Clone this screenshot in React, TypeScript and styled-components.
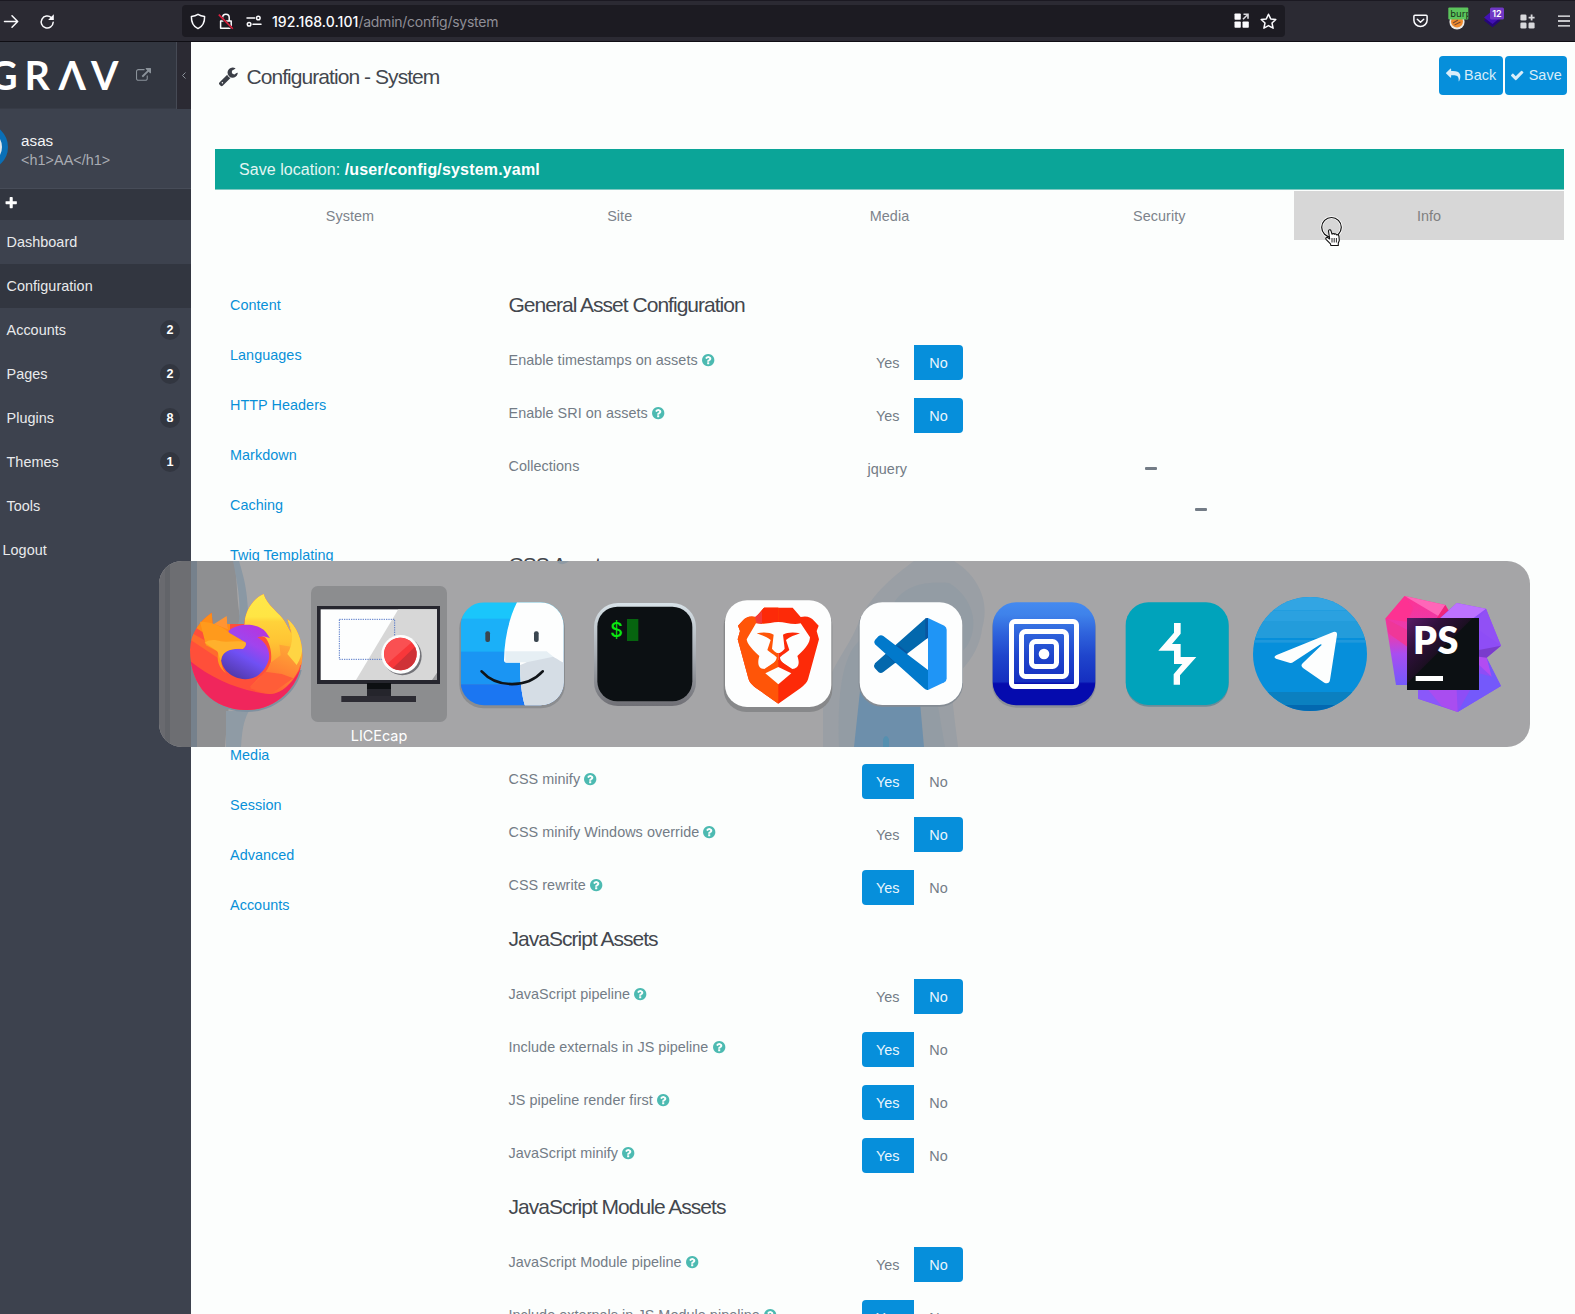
import React from "react";
import styled, { createGlobalStyle } from "styled-components";

const SANS = `"Liberation Sans", Arial, sans-serif`;
const UI = `Inter, Roboto, sans-serif`;

const GlobalStyle = createGlobalStyle`
  html, body { margin: 0; padding: 0; }
  body { background: #fcfefd; overflow: hidden; }
  *, *::before, *::after { box-sizing: border-box; }
`;

const Screen = styled.div`
  position: relative;
  width: 1575px;
  height: 1314px;
  overflow: hidden;
  display: flex;
  flex-direction: column;
  background: #fcfefd;
  font-family: ${SANS};
  font-size: 14.4px;
  letter-spacing: 0.045px;
  color: #737c86;
`;

/* ---------- browser chrome ---------- */

const Chrome = styled.header`
  flex: none;
  height: 42px;
  display: flex;
  align-items: center;
  background: #2b2a33;
  border-top: 1px solid #1b1922;
  border-bottom: 1px solid #0f0e14;
  color: #fbfbfe;
  font-family: ${UI};
`;

const Glyph = styled.svg<{ $ml?: number; $up?: number }>`
  flex: none;
  display: block;
  overflow: visible;
  margin-left: ${(p) => p.$ml ?? 0}px;
  margin-bottom: ${(p) => p.$up ?? 0}px;
`;

const UrlBar = styled.div`
  flex: none;
  width: 1103px;
  height: 32px;
  margin-left: 126px;
  border-radius: 4px;
  background: #1c1b22;
  display: flex;
  align-items: center;
`;

const Url = styled.div`
  margin-left: 10px;
  width: 958px;
  font-size: 14px;
  line-height: 33px;
  padding-top: 1px;
  color: #8f8e96;
  letter-spacing: -0.25px;
  b {
    font-weight: 500;
    color: #fbfbfe;
    letter-spacing: 0.06px;
  }
`;

/* ---------- sidebar ---------- */

const Body = styled.div`
  flex: 1;
  display: flex;
  min-height: 0;
`;

const Sidebar = styled.aside`
  flex: none;
  width: 191px;
  background: #3d424e;
  color: #e9eaec;
`;

const Brand = styled.div`
  height: 67px;
  display: flex;
  align-items: center;
  background: #323640;
  border-bottom: 1px solid #373b46;
`;

const Collapse = styled.div`
  margin-left: auto;
  width: 15px;
  height: 67px;
  background: #2b2a33;
  border-left: 1px solid #464a55;
  display: flex;
  align-items: center;
  justify-content: center;
`;

const User = styled.div`
  height: 80px;
  display: flex;
  align-items: center;
  border-bottom: 1px solid #474c58;
`;

const Avatar = styled.div`
  flex: none;
  width: 46px;
  height: 46px;
  margin-left: -38px;
  margin-top: -3px;
  border-radius: 50%;
  border: 6px solid #0a6fb6;
  background: #dfe6ea;
`;

const UserText = styled.div`
  margin-left: 13px;
  padding-top: 3px;
  display: flex;
  flex-direction: column;
`;

const UserName = styled.span`
  font-size: 15.2px;
  line-height: 20px;
  color: #f4f5f6;
`;

const UserTitle = styled.span`
  line-height: 19px;
  color: #a9acb3;
`;

const QuickAdd = styled.div`
  height: 31px;
  display: flex;
  align-items: center;
  padding: 0 0 3px 3.5px;
  background: #323640;
`;

const NavItem = styled.div<{ $active?: boolean; $indent?: number }>`
  height: 44px;
  display: flex;
  align-items: center;
  justify-content: space-between;
  padding: 0 11px 0 ${(p) => p.$indent ?? 6.5}px;
  background: ${(p) => (p.$active ? "#323640" : "transparent")};
`;

const Count = styled.span`
  width: 20px;
  height: 20px;
  border-radius: 50%;
  background: #323640;
  color: #fff;
  font-size: 12.6px;
  font-weight: 700;
  line-height: 20px;
  text-align: center;
`;

/* ---------- main column ---------- */

const Main = styled.main`
  flex: 1;
  min-width: 0;
  display: flex;
  flex-direction: column;
`;

const TitleBar = styled.div`
  flex: none;
  height: 107px;
  padding: 14px 8px 0 27px;
  display: flex;
  align-items: flex-start;
`;

const TitleIcon = styled.div`
  padding-top: 10px;
`;

const Title = styled.h1`
  flex: 1;
  margin: 0 0 0 8px;
  font-weight: 400;
  font-size: 21px;
  line-height: 41px;
  letter-spacing: -0.94px;
  color: #43474e;
`;

const Button = styled.button<{ $w: number }>`
  width: ${(p) => p.$w}px;
  height: 38.5px;
  margin: 0 0 0 2px;
  padding: 0;
  border: 0;
  border-radius: 4px;
  background: #068fdb;
  color: #d9edf9;
  font: inherit;
  letter-spacing: inherit;
  display: flex;
  align-items: center;
  justify-content: center;
  gap: 4px;
`;

const SaveLocation = styled.div`
  flex: none;
  height: 41px;
  margin: 0 11px 0 24px;
  padding-left: 24px;
  font-size: 16px;
  line-height: 42px;
  background: #0ba598;
  border-bottom: 1px solid #7fc9c2;
  color: #e3f5f3;
  b {
    color: #fff;
    letter-spacing: 0.17px;
  }
`;

const Tabs = styled.div`
  flex: none;
  height: 50px;
  margin: 0 11px 0 24px;
  padding-top: 1px;
  display: flex;
`;

const Tab = styled.div<{ $hover?: boolean }>`
  flex: 1;
  text-align: center;
  line-height: 50px;
  color: ${(p) => (p.$hover ? "#808080" : "#7d838b")};
  background: ${(p) => (p.$hover ? "#d7d7d7" : "transparent")};
`;

const Panel = styled.div`
  flex: none;
  display: flex;
  padding: 40px 0 0 39px;
`;

const SideTabs = styled.nav`
  width: 278.5px;
  display: flex;
  flex-direction: column;
`;

const SideTab = styled.a<{ $skip?: number }>`
  height: 50px;
  margin-top: ${(p) => (p.$skip ?? 0) * 50}px;
  line-height: 51px;
  color: #0890d8;
`;

const Fields = styled.div`
  padding-top: 9px;
`;

const Heading = styled.h2`
  margin: 0;
  height: 56px;
  font-weight: 400;
  font-size: 21px;
  line-height: 32px;
  letter-spacing: -0.98px;
  color: #43474e;
`;

const Row = styled.div<{ $h?: number }>`
  height: ${(p) => p.$h ?? 53}px;
  display: flex;
  align-items: flex-start;
`;

const Label = styled.div`
  width: 353px;
  display: flex;
  align-items: center;
  line-height: 31px;
`;

const Toggle = styled.div`
  display: flex;
  height: 35.2px;
  line-height: 36px;
`;

const Choice = styled.span<{ $on: boolean; $side: "l" | "r" }>`
  width: ${(p) => (p.$side === "l" ? 52.5 : 49)}px;
  text-align: center;
  color: ${(p) => (p.$on ? "#eaf6fd" : "#737c86")};
  background: ${(p) => (p.$on ? "#068fdb" : "transparent")};
  border-radius: ${(p) => (p.$side === "l" ? "4px 0 0 4px" : "0 4px 4px 0")};
`;

const Collection = styled.div`
  display: flex;
  flex-direction: column;
  margin: -3px 0 0 6px;
`;

const CollectionItem = styled.div`
  height: 41px;
  display: flex;
  align-items: center;
`;

const CollectionKey = styled.span<{ $w: number }>`
  width: ${(p) => p.$w}px;
`;

const Minus = styled.span`
  width: 12px;
  height: 3px;
  border-radius: 1px;
  background: #737c86;
`;

/* ---------- app switcher, floating over the page ---------- */

const Switcher = styled.div`
  position: absolute;
  left: 159px;
  top: 561px;
  width: 1371px;
  height: 186px;
  border-radius: 23px;
  overflow: hidden;
  background: #a5a5a7;
`;

const Backdrop = styled.svg`
  position: absolute;
  inset: 0;
  display: block;
`;

const AppRow = styled.div`
  position: relative;
  display: flex;
  padding: 25px 0 0 19px;
`;

const AppCell = styled.div`
  flex: none;
  width: 136px;
  margin-right: -3px;
`;

const AppTile = styled.div<{ $selected?: boolean }>`
  width: 136px;
  height: 136px;
  border-radius: 7px;
  background: ${(p) => (p.$selected ? "#8c8d8f" : "transparent")};
`;

const AppArt = styled.svg`
  display: block;
`;

const AppName = styled.div`
  font-family: ${UI};
  font-size: 14.4px;
  line-height: 28px;
  letter-spacing: 0;
  text-align: center;
  color: #fff;
`;

const Cursor = styled.svg`
  position: absolute;
  left: 1318px;
  top: 214px;
`;

/* ---------- icons ---------- */

const FA = {
  external:
    "M1408 928v320q0 119-84.5 203.5t-203.5 84.5h-832q-119 0-203.5-84.5t-84.5-203.5v-832q0-119 84.5-203.5t203.5-84.5h704q14 0 23 9t9 23v64q0 14-9 23t-23 9h-704q-66 0-113 47t-47 113v832q0 66 47 113t113 47h832q66 0 113-47t47-113v-320q0-14 9-23t23-9h64q14 0 23 9t9 23zm384-864v512q0 26-19 45t-45 19-45-19l-176-176-652 652q-10 10-23 10t-23-10l-114-114q-10-10-10-23t10-23l652-652-176-176q-19-19-19-45t19-45 45-19h512q26 0 45 19t19 45z",
  plus: "M1600 736v192q0 40-28 68t-68 28h-416v416q0 40-28 68t-68 28h-192q-40 0-68-28t-28-68v-416h-416q-40 0-68-28t-28-68v-192q0-40 28-68t68-28h416v-416q0-40 28-68t68-28h192q40 0 68 28t28 68v416h416q40 0 68 28t28 68z",
  check:
    "M1671 566q0 40-28 68l-724 724-136 136q-28 28-68 28t-68-28l-136-136-362-362q-28-28-28-68t28-68l136-136q28-28 68-28t68 28l294 295 656-657q28-28 68-28t68 28l136 136q28 28 28 68z",
  reply:
    "M1792 1120q0 166-127 451-3 7-10.5 24t-13.5 30-13 22q-12 17-28 17-15 0-23.5-10t-8.5-25q0-9 2.5-26.5t2.5-23.5q5-68 5-123 0-101-17.5-181t-48.5-138.5-80-101-105.5-69.5-133-42.5-154-21.5-175.5-6h-224v256q0 26-19 45t-45 19-45-19l-512-512q-19-19-19-45t19-45l512-512q19-19 45-19t45 19 19 45v256h224q713 0 875 403 53 134 53 333z",
  wrench:
    "M448 1472q0-26-19-45t-45-19-45 19-19 45 19 45 45 19 45-19 19-45zm644-420l-682 682q-37 37-90 37-52 0-91-37l-106-108q-38-36-38-90 0-53 38-91l681-681q39 98 114.5 173.5t173.5 114.5zm634-435q0 39-23 106-47 134-164.5 217.5t-258.5 83.5q-185 0-316.5-131.5t-131.5-316.5 131.5-316.5 316.5-131.5q58 0 121.5 16.5t107.5 46.5q16 11 16 28t-16 28l-293 169v224l193 107q5-3 79-48.5t135.5-81 70.5-35.5q15 0 23.5 10t8.5 25z",
  help: "M1024 1376v-192q0-14-9-23t-23-9h-192q-14 0-23 9t-9 23v192q0 14 9 23t23 9h192q14 0 23-9t9-23zm256-672q0-88-55.5-163t-138.5-116-170-41q-243 0-371 213-15 24 8 42l132 100q7 6 19 6 16 0 25-12 53-68 86-92 34-24 86-24 48 0 85.5 26t37.5 59q0 38-20 61t-68 45q-63 28-115.5 86.5t-52.5 125.5v36q0 14 9 23t23 9h192q14 0 23-9t9-23q0-19 21.5-49.5t54.5-49.5q32-18 49-28.5t46-35 44.5-48 28-60.5 12.5-81zm384 192q0 209-103 385.5t-279.5 279.5-385.5 103-385.5-103-279.5-279.5-103-385.5 103-385.5 279.5-279.5 385.5-103 385.5 103 279.5 279.5 103 385.5z",
};

function Fa({ name, size, ml, color = "currentColor" }: { name: keyof typeof FA; size: number; ml?: number; color?: string }) {
  return (
    <Glyph width={size} height={size} viewBox="0 0 1792 1792" $ml={ml}>
      <path d={FA[name]} fill={color} />
    </Glyph>
  );
}

function BrowserChrome() {
  const line = { fill: "none", stroke: "#fbfbfe", strokeWidth: 1.5, strokeLinecap: "round" as const, strokeLinejoin: "round" as const };
  return (
    <Chrome>
      <Glyph $ml={3} width="16" height="16" viewBox="0 0 16 16">
        <path {...line} d="M1.5 8.5H14.5M9 2.8L14.7 8.5L9 14.2" />
      </Glyph>
      <Glyph $ml={20} width="17" height="17" viewBox="0 0 17 17">
        <path {...line} d="M14.2 9.3A6 6 0 1 1 12.3 4.6" />
        <path d="M14.8 1.2V6.9H9.1Z" fill="#fbfbfe" />
      </Glyph>
      <UrlBar>
        <Glyph $ml={7.5} width="16" height="17" viewBox="0 0 16 17">
          <path {...line} d="M8 1.3C6 2.6 3.8 3.2 1.4 3.4C1.2 9.5 3 13.2 8 15.6C13 13.2 14.8 9.5 14.6 3.4C12.2 3.2 10 2.6 8 1.3Z" />
        </Glyph>
        <Glyph $ml={12.5} width="16" height="17" viewBox="0 0 16 17">
          <path {...line} d="M4.6 7.5V4.6A3.3 3.3 0 0 1 11.2 4.6V7.5M2.6 8H13.2V15.2H2.6Z" />
          <path d="M1 2.2L14.6 15.8" stroke="#1c1b22" strokeWidth="2.6" />
          <path d="M.8 1.6L14.8 15.8" stroke="#e3203f" strokeWidth="1.6" />
        </Glyph>
        <Glyph $ml={12} width="16" height="12" viewBox="0 0 16 12">
          <g {...line}>
            <path d="M1 3H8.6M7 9.2H15" />
            <circle cx="12.3" cy="3" r="1.8" />
            <circle cx="3.1" cy="9.2" r="1.8" />
          </g>
        </Glyph>
        <Url>
          <b>192.168.0.101</b>/admin/config/system
        </Url>
        <Glyph width="15" height="15" viewBox="0 0 15 15" $ml={3.5} $up={1}>
          <g fill="#fbfbfe">
            <rect x=".5" y=".5" width="6.3" height="6.3" rx=".8" />
            <rect x=".5" y="8.5" width="6.3" height="6.3" rx=".8" />
            <rect x="8.5" y="8.5" width="6.3" height="6.3" rx=".8" />
          </g>
          <path d="M9.500 1.200H14V5.800M14 1.200L9 6.200" fill="none" stroke="#d8d8dc" strokeWidth="1.600" />
        </Glyph>
        <Glyph width="17" height="17" viewBox="0 0 17 17" $ml={11.5}>
          <path {...line} d="M8.5 1.2L10.7 5.9L15.8 6.5L12 10L13.1 15.2L8.5 12.6L3.9 15.2L5 10L1.2 6.5L6.3 5.9Z" />
        </Glyph>
      </UrlBar>
      <Glyph width="15" height="14" viewBox="0 0 15 14" $ml={127.5}>
        <path {...line} d="M1.9 1.2H13.1Q14.1 1.2 14.1 2.2V6.2A6.6 6.3 0 0 1 .9 6.2V2.2Q.9 1.2 1.9 1.2ZM4.3 5.2L7.5 8.2L10.7 5.2" />
      </Glyph>
      <Glyph width="21" height="21" viewBox="0 0 21 21" $ml={20} $up={3}>
        <circle cx="9" cy="12.800" r="7.6" fill="#eceae6" />
        <circle cx="9" cy="12.4" r="6" fill="#f08a2c" />
        <path d="M5 14L10 11M6.5 16L12.5 13" stroke="#7a4a30" strokeWidth="1.2" />
        <rect x=".3" y="-1.600" width="20" height="12" rx="1" fill="#5cc45c" />
        <svg x="0" y="-2.200" width="20" height="13">
          <text x="2.2" y="9.8" fontFamily="DejaVu Sans, sans-serif" fontSize="9" fill="#17301a">burp</text>
        </svg>
      </Glyph>
      <Glyph width="20" height="21" viewBox="0 0 20 21" $ml={15.5} $up={3}>
        <path d="M8.5 5L16.5 11.5L8.5 18.3L0 11.5Z" fill="#26067a" />
        <path d="M8.5 1.5L16.5 8.6L8.5 15L0 8.6Z" fill="#4211b4" />
        <rect x="6" y="-1.600" width="14" height="12" rx="1.5" fill="#7038c4" />
        <text x="13" y="7.700" textAnchor="middle" fontFamily="Inter, sans-serif" fontWeight="600" fontSize="9" fill="#fff">12</text>
      </Glyph>
      <Glyph width="15" height="15" viewBox="0 0 15 15" $ml={16}>
        <g fill="#d8d8dc">
          <rect x=".4" y=".4" width="6.1" height="6.1" rx="1.3" />
          <rect x=".4" y="8.5" width="6.1" height="6.1" rx="1.3" />
          <rect x="8.5" y="8.5" width="6.1" height="6.1" rx="1.3" />
        </g>
        <path d="M11.6 .6V6.6M8.6 3.6H14.6" stroke="#d8d8dc" strokeWidth="1.8" />
      </Glyph>
      <Glyph width="12" height="12" viewBox="0 0 12 12" $ml={22.5}>
        <path d="M0 1.2H12M0 6H12M0 10.8H12" stroke="#fbfbfe" strokeWidth="1.3" />
      </Glyph>
    </Chrome>
  );
}

/* ---------- app artwork, drawn on a grid three times finer than the tile ---------- */

function Art({ dx, children }: { dx: number; children: React.ReactNode }) {
  return (
    <AppArt width="136" height="136" viewBox="0 0 136 136">
      <g transform={`translate(${-dx} -36) scale(.33333)`}>{children}</g>
    </AppArt>
  );
}

const Firefox = () => (
  <Art dx={28}>
    <defs>
      <linearGradient id="ffTail" x1="0" y1="0" x2="0" y2="1">
        <stop offset="0" stopColor="#ffe84a" />
        <stop offset=".3" stopColor="#ffe544" />
        <stop offset=".36" stopColor="#ffd23a" />
        <stop offset=".6" stopColor="#ffc434" />
        <stop offset="1" stopColor="#ff9030" />
      </linearGradient>
      <linearGradient id="ffFlank" x1=".7" y1="0" x2=".3" y2="1">
        <stop offset="0" stopColor="#ffa836" />
        <stop offset=".5" stopColor="#ff8434" />
        <stop offset="1" stopColor="#ff5a38" />
      </linearGradient>
      <linearGradient id="ffGlobe" x1=".8" y1="0" x2=".3" y2="1">
        <stop offset="0" stopColor="#b833dd" />
        <stop offset=".35" stopColor="#a044ee" />
        <stop offset=".6" stopColor="#7050f4" />
        <stop offset="1" stopColor="#5038a8" />
      </linearGradient>
      <clipPath id="ffBody">
        <path d="M120 300C122 245 150 213 185 188L188 222L283 222C285 180 310 145 341 132C350 165 390 190 405 215L424 250L412 207C440 230 458 270 457 320C452 410 380 480 290 480C190 480 120 410 120 300Z" />
      </clipPath>
    </defs>
    <path d="M125 345C140 430 205 486 292 486C370 486 440 430 455 360Z" fill="#7f91a0" />
    <g clipPath="url(#ffBody)">
      <rect x="110" y="120" width="360" height="370" fill="#ff4f3a" />
      <path d="M110 325C180 385 270 425 362 432C400 428 430 400 460 340V500H110Z" fill="#f0265c" />
      <path d="M110 240L215 300L213 330L110 262Z" fill="#ff6b2d" />
      <path d="M130 180H240V300L140 235Z" fill="#ff8c16" />
      <path d="M283 225C283 170 310 140 341 125L480 200V330L440 350L345 375C370 350 370 290 345 262L283 240Z" fill="url(#ffTail)" />
      <path d="M388 284L424 290L456 330L446 360C425 400 395 430 362 432C335 430 315 425 300 410L325 385C345 372 356 355 360 340L392 316Z" fill="url(#ffFlank)" />
      <path d="M345 365L395 372L430 385L362 432L300 415Z" fill="#ff5d38" />
      <path d="M412 205C432 245 430 280 412 312L440 345C470 300 462 230 412 205Z" fill="#ffd543" />
    </g>
    <path d="M192 222L230 198C232 212 230 226 234 238Z" fill="#ff9433" />
    <path d="M236 242C262 220 310 220 332 234C345 240 352 252 360 265C345 258 333 258 322 262C350 278 362 305 356 330C344 368 315 389 285 388C245 386 214 358 213 325L225 290Z" fill="url(#ffGlobe)" />
    <path d="M150 215C190 215 226 235 240 250L286 277C290 284 284 294 278 297C245 294 216 300 213 332C216 356 225 366 232 372C206 356 198 328 206 306L168 286Z" fill="#ff9a1c" />
    <path d="M164 278C180 266 200 270 212 274C235 278 262 270 286 277C292 285 282 295 278 297C245 294 216 302 213 332C206 322 206 306 200 302Z" fill="#ffb02c" />
  </Art>
);

const Licecap = () => (
  <Art dx={161}>
    <rect x="501" y="168" width="369" height="234" fill="#26262e" />
    <rect x="512" y="178" width="349" height="212" fill="#fdfefe" />
    <path d="M745 178H861V390H618Z" fill="#d7d7d7" />
    <path d="M861 368V390H846Z" fill="#9b9b9d" />
    <rect x="568" y="208" width="166" height="120" fill="none" stroke="#5578c8" strokeWidth="3" strokeDasharray="4 3" />
    <circle cx="757" cy="318" r="58" fill="#737378" />
    <circle cx="752" cy="313" r="58" fill="#fdfefe" />
    <circle cx="751" cy="312" r="49" fill="#f8373a" />
    <path d="M712 283A49 49 0 0 1 785 277L712 341A49 49 0 0 1 712 283Z" fill="#fa5052" />
    <path d="M795 290A49 49 0 0 1 728 355Z" fill="#cf3237" />
    <rect x="651" y="399" width="72" height="40" fill="#25252c" />
    <rect x="651" y="399" width="72" height="18" fill="#0d0f12" />
    <rect x="574" y="438" width="224" height="18" fill="#2c2b33" />
  </Art>
);

const Finder = () => (
  <Art dx={294}>
    <defs>
      <clipPath id="fdClip">
        <rect x="932" y="157" width="309" height="309" rx="70" />
      </clipPath>
    </defs>
    <rect x="928" y="163" width="317" height="312" rx="72" fill="#8b8d90" />
    <g clipPath="url(#fdClip)">
      <rect x="932" y="157" width="309" height="50" fill="#1ac6fb" />
      <rect x="932" y="206" width="309" height="100" fill="#1bb0f8" />
      <rect x="932" y="305" width="309" height="99" fill="#1a95f3" />
      <rect x="932" y="403" width="309" height="65" fill="#1b76f2" />
      <path d="M1101 157C1075 210 1063 270 1062 330Q1062 338 1070 338H1110C1110 390 1114 430 1125 468H1245V157Z" fill="#fdfefe" />
      <path d="M1110 345C1150 335 1130 315 1180 312C1210 314 1225 332 1245 340V468H1125C1114 430 1110 390 1110 345Z" fill="#d5dde5" />
      <path d="M1066 304H1190L1210 320L1130 337H1066Z" fill="#e6eff4" />
    </g>
    <rect x="1006" y="244" width="14" height="32" rx="6" fill="#3a4650" />
    <rect x="1152" y="244" width="14" height="32" rx="6" fill="#3a4650" />
    <path d="M995 364C1040 414 1130 416 1178 364" fill="none" stroke="#101418" strokeWidth="8" strokeLinecap="round" />
  </Art>
);

const Terminal = () => (
  <Art dx={17}>
    <defs>
      <linearGradient id="tmRim" x1="0" y1="0" x2="0" y2="1">
        <stop offset="0" stopColor="#d8e2e8" />
        <stop offset=".5" stopColor="#a9aeb4" />
        <stop offset="1" stopColor="#6f6f75" />
      </linearGradient>
    </defs>
    <rect x="102" y="159" width="306" height="309" rx="72" fill="url(#tmRim)" />
    <rect x="112" y="170" width="285" height="284" rx="60" fill="#0c1013" />
    <text x="151" y="261" fontFamily="Inter, sans-serif" fontWeight="500" fontSize="62" fill="#0ae80f" textLength="38" lengthAdjust="spacingAndGlyphs">$</text>
    <rect x="201" y="207" width="34" height="66" fill="#06640f" />
  </Art>
);

const Brave = () => (
  <Art dx={150}>
    <defs>
      <clipPath id="brLeft">
        <rect x="500" y="150" width="155" height="330" />
      </clipPath>
      <path
        id="brShape"
        d="M612 173H698L722 201C740 196 754 202 762 212L776 227L770 243L777 268L745 385C742 398 732 406 722 414L655 461L588 414C578 406 568 398 565 385L533 268L540 243L534 227L548 212C556 202 570 196 588 201Z"
      />
    </defs>
    <rect x="491" y="160" width="326" height="326" rx="68" fill="#87888a" />
    <rect x="495" y="151" width="319" height="320" rx="66" fill="#fdfefe" />
    <use href="#brShape" fill="#fd2a08" />
    <use href="#brShape" fill="#ff5508" clipPath="url(#brLeft)" />
    <path d="M590 201L612 173H655V220H592Z" fill="#fd2a08" />
    <path d="M585 201L606 184V222L590 220Z" fill="#f23a3a" />
    <path d="M588 220C612 226 634 216 655 216C676 216 698 226 722 220L750 262C748 280 742 290 712 318C722 345 712 356 697 357L655 329L613 357C598 356 590 345 598 318C568 290 562 280 560 268Z" fill="#fdfefe" />
    <path d="M590 250C610 245 630 247 641 254L636 296C645 307 651 309 655 309V334C640 346 628 352 613 357C640 345 650 332 650 322C640 312 628 306 622 300L632 270C620 260 606 256 590 250Z" fill="#ff5508" />
    <path d="M720 250C700 245 680 247 669 254L674 296C665 307 659 309 655 309V334C670 346 682 352 697 357C670 345 660 332 660 322C670 312 682 306 688 300L678 270C690 260 704 256 720 250Z" fill="#fd2a08" />
    <path d="M655 351L694 370L655 403L616 370Z" fill="#fdfefe" />
  </Art>
);

const VsCode = () => (
  <Art dx={283}>
    <rect x="896" y="160" width="313" height="310" rx="70" fill="#858c94" />
    <rect x="899" y="157" width="308" height="308" rx="68" fill="#fdfefe" />
    <path d="M945 340L1092 209Q1098 203 1104 204V263L970 366Q963 372 956 367L944 354Q940 347 945 340Z" fill="#0368ad" />
    <path d="M1002 290L1018 287L1044 308L1006 340L982 318Z" fill="#0a56a0" />
    <path d="M945 283Q940 276 945 270L956 258Q963 253 970 258L1104 360V420Q1098 421 1092 415Z" fill="#0179cb" />
    <path d="M1104 204L1153 227Q1160 231 1160 239V385Q1160 393 1153 397L1104 420Z" fill="#1f95f6" />
    <path d="M1096 205H1104V264L1096 268Z" fill="#0a56a0" />
  </Art>
);

const Targets = () => (
  <Art dx={6}>
    <defs>
      <linearGradient id="tgBlue" x1="0" y1="0" x2="0" y2="1">
        <stop offset="0" stopColor="#448af0" />
        <stop offset=".12" stopColor="#3f82ea" />
        <stop offset=".3" stopColor="#2f63dc" />
        <stop offset=".52" stopColor="#1f45cc" />
        <stop offset=".77" stopColor="#152fc0" />
        <stop offset=".79" stopColor="#050bae" />
        <stop offset="1" stopColor="#050bae" />
      </linearGradient>
    </defs>
    <rect x="66" y="162" width="312" height="311" rx="72" fill="#8b8f98" />
    <rect x="68" y="157" width="308" height="309" rx="70" fill="url(#tgBlue)" />
    <g fill="none" stroke="#fff" strokeWidth="15">
      <rect x="124.500" y="214.500" width="195" height="195" rx="10" />
      <rect x="154.500" y="244.500" width="135" height="135" rx="12" />
      <rect x="184.500" y="274.500" width="75" height="75" rx="12" />
    </g>
    <circle cx="222" cy="312" r="16" fill="#fff" />
  </Art>
);

const Burp = () => (
  <Art dx={139}>
    <rect x="468" y="162" width="308" height="308" rx="68" fill="#6b8c98" />
    <rect x="467" y="157" width="309" height="308" rx="68" fill="#00a3bb" />
    <path d="M612 219H632V251L606 282H632V321H679L630 376V404H611V373L637 342H612V302H565L612 248Z" fill="#fdfefe" />
  </Art>
);

const Telegram = () => (
  <Art dx={2}>
    <defs>
      <clipPath id="tlClip">
        <circle cx="210" cy="312" r="171" />
      </clipPath>
    </defs>
    <g clipPath="url(#tlClip)">
      <rect x="30" y="135" width="360" height="360" fill="#068fdb" />
      <rect x="30" y="135" width="360" height="46" fill="#32a5e3" />
      <rect x="30" y="181" width="360" height="32" fill="#2ba1e0" />
      <rect x="30" y="213" width="360" height="51" fill="#239cdb" />
      <rect x="30" y="270" width="360" height="8" fill="#1f98dc" />
      <rect x="30" y="426" width="360" height="40" fill="#0b80c0" />
      <rect x="30" y="465" width="360" height="30" fill="#0368b0" />
    </g>
    <path d="M110 315L280 246Q292 243 291 255L270 390Q267 404 253 398L190 355Q180 348 188 340L245 285Q244 281 238 285L160 336Q155 340 148 338L108 326Q98 321 110 315Z" fill="#fdfefe" />
  </Art>
);

const PhpStorm = () => (
  <Art dx={135}>
    <defs>
      <linearGradient id="psLeft" x1="0" y1="0" x2="0" y2="1">
        <stop offset="0" stopColor="#fd3292" />
        <stop offset=".45" stopColor="#e63cb4" />
        <stop offset=".65" stopColor="#a94df0" />
        <stop offset="1" stopColor="#7459fb" />
      </linearGradient>
      <linearGradient id="psBox" x1="0" y1="0" x2="1" y2="1">
        <stop offset="0" stopColor="#5a1c68" />
        <stop offset=".25" stopColor="#30103c" />
        <stop offset=".45" stopColor="#1c0f22" />
        <stop offset=".46" stopColor="#0c1013" />
      </linearGradient>
    </defs>
    <path d="M494 138L616 165L640 205L560 405H468L436 206Z" fill="url(#psLeft)" />
    <path d="M494 138L616 165L595 198Z" fill="#ff66b8" />
    <path d="M436 206L494 138L520 175L502 215Z" fill="#fd3292" />
    <path d="M438 206L502 240V290L445 250Z" fill="#ef3798" />
    <path d="M616 165L626 182L612 205H590Z" fill="#f0267c" />
    <path d="M650 159L738 176L783 287L740 323L783 408L653 486L534 446V400L600 205Z" fill="#8e4df6" />
    <path d="M650 159L738 176L700 205H600L622 185Z" fill="#bd72ff" />
    <path d="M738 176L783 287L716 240V205Z" fill="#9150f5" />
    <path d="M783 287L740 323L717 345V300Z" fill="#7a3ccc" />
    <path d="M717 320L740 323L760 385L717 345Z" fill="#b24cf2" />
    <path d="M740 323L783 408L653 486L690 420H717V370L755 380Z" fill="#7459fb" />
    <path d="M534 420H575L610 470L534 446Z" fill="#8a58fa" />
    <path d="M565 420H650L653 486L605 468Z" fill="#a94df0" />
    <rect x="501" y="204" width="216" height="216" fill="url(#psBox)" />
    <text x="519" y="312" fontFamily="Lato, sans-serif" fontWeight="800" fontSize="113" letterSpacing="2" fill="#fff">PS</text>
    <rect x="527" y="378" width="82" height="15" fill="#fff" />
  </Art>
);

const APPS: { id: string; Icon: React.FC; name?: string }[] = [
  { id: "firefox", Icon: Firefox },
  { id: "licecap", Icon: Licecap, name: "LICEcap" },
  { id: "finder", Icon: Finder },
  { id: "terminal", Icon: Terminal },
  { id: "brave", Icon: Brave },
  { id: "vscode", Icon: VsCode },
  { id: "targets", Icon: Targets },
  { id: "burp", Icon: Burp },
  { id: "telegram", Icon: Telegram },
  { id: "phpstorm", Icon: PhpStorm },
];

function AppSwitcher() {
  return (
    <Switcher>
      <Backdrop width="1371" height="186" viewBox="0 0 1371 186">
        <rect width="6" height="186" fill="#696a6f" />
        <rect x="6" width="5" height="186" fill="#626469" />
        <rect x="11" width="21" height="186" fill="#6d6e72" />
        <rect x="32" width="6" height="186" fill="#76818c" />
        <path d="M38 0H75C79 20 77 40 82 60L68 160L66 186H38Z" fill="#8e8f91" />
        <path d="M74 0H80C86 20 88 30 89 50L86 90H70L80 60C82 40 78 20 74 0Z" fill="#8a98a4" />
        <path d="M67 150H90C84 160 83 172 82 186H67Z" fill="#8f9ba5" />
        <path d="M398 0H410Q405 5 399 2Z" fill="#8e9aa4" />
        <path d="M755 0H795C818 14 832 40 823 68C820 92 805 108 791 120L799 186H664V150C664 110 690 90 700 60C715 30 735 15 755 0Z" fill="#9a9fa5" />
        <path d="M735 42C745 25 765 20 790 22C812 35 822 62 808 85L775 122L786 186H680C678 130 684 95 700 80Z" fill="#939ca4" />
        <path d="M695 186L701 130H760L765 186Z" fill="#6d8fab" />
        <path d="M724 186V178Q727 172 730 178V186Z" fill="#5590b0" />
      </Backdrop>
      <AppRow>
        {APPS.map(({ id, Icon, name }) => (
          <AppCell key={id}>
            <AppTile $selected={!!name}>
              <Icon />
            </AppTile>
            {name && <AppName>{name}</AppName>}
          </AppCell>
        ))}
      </AppRow>
    </Switcher>
  );
}

/* ---------- page content ---------- */

const NAV: { label: string; count?: number; active?: boolean; indent?: number }[] = [
  { label: "Dashboard" },
  { label: "Configuration", active: true },
  { label: "Accounts", count: 2 },
  { label: "Pages", count: 2 },
  { label: "Plugins", count: 8 },
  { label: "Themes", count: 1 },
  { label: "Tools" },
  { label: "Logout", indent: 2.5 },
];

const SIDE_TABS: { label: string; skip?: number }[] = [
  { label: "Content" },
  { label: "Languages" },
  { label: "HTTP Headers" },
  { label: "Markdown" },
  { label: "Caching" },
  { label: "Twig Templating" },
  { label: "Media", skip: 3 },
  { label: "Session" },
  { label: "Advanced" },
  { label: "Accounts" },
];

function ToggleRow({ label, on }: { label: string; on: boolean }) {
  return (
    <Row>
      <Label>
        {label}
        <Fa name="help" size={14.4} ml={3.2} color="#4cbab1" />
      </Label>
      <Toggle>
        <Choice $on={on} $side="l">Yes</Choice>
        <Choice $on={!on} $side="r">No</Choice>
      </Toggle>
    </Row>
  );
}

export default function App() {
  return (
    <>
      <GlobalStyle />
      <Screen>
        <BrowserChrome />
        <Body>
          <Sidebar>
            <Brand>
              <Glyph width="122" height="40" viewBox="0 0 122 40">
                <g fontFamily="Lato, sans-serif" fontWeight="700" fontSize="39.5" letterSpacing="0" fill="#fff">
                  <text x="-11" y="34.500">G</text>
                  <text x="24.500" y="34.500">R</text>
                  <text x="58.500" y="34.500">Λ</text>
                  <text x="91" y="34.500">V</text>
                </g>
              </Glyph>
              <Fa name="external" size={15} ml={13.5} color="#8b929a" />
              <Collapse>
                <Glyph width="4" height="7" viewBox="0 0 4 7">
                  <path d="M3.500 .5L.5 3.500L3.500 6.500" fill="none" stroke="#8b929a" />
                </Glyph>
              </Collapse>
            </Brand>
            <User>
              <Avatar />
              <UserText>
                <UserName>asas</UserName>
                <UserTitle>{"<h1>AA</h1>"}</UserTitle>
              </UserText>
            </User>
            <QuickAdd>
              <Fa name="plus" size={14.4} color="#fff" />
            </QuickAdd>
            {NAV.map((n) => (
              <NavItem key={n.label} $active={n.active} $indent={n.indent}>
                {n.label}
                {n.count !== undefined && <Count>{n.count}</Count>}
              </NavItem>
            ))}
          </Sidebar>
          <Main>
            <TitleBar>
              <TitleIcon>
                <Fa name="wrench" size={20.5} color="#3b3f47" />
              </TitleIcon>
              <Title>Configuration - System</Title>
              <Button $w={64}>
                <Fa name="reply" size={14.4} />
                Back
              </Button>
              <Button $w={62}>
                <Fa name="check" size={14.4} />
                Save
              </Button>
            </TitleBar>
            <SaveLocation>
              Save location: <b>/user/config/system.yaml</b>
            </SaveLocation>
            <Tabs>
              <Tab>System</Tab>
              <Tab>Site</Tab>
              <Tab>Media</Tab>
              <Tab>Security</Tab>
              <Tab $hover>Info</Tab>
            </Tabs>
            <Panel>
              <SideTabs>
                {SIDE_TABS.map((t) => (
                  <SideTab key={t.label} $skip={t.skip}>
                    {t.label}
                  </SideTab>
                ))}
              </SideTabs>
              <Fields>
                <Heading>General Asset Configuration</Heading>
                <ToggleRow label="Enable timestamps on assets" on={false} />
                <ToggleRow label="Enable SRI on assets" on={false} />
                <Row $h={98}>
                  <Label>Collections</Label>
                  <Collection>
                    <CollectionItem>
                      <CollectionKey $w={277.5}>jquery</CollectionKey>
                      <Minus />
                    </CollectionItem>
                    <CollectionItem>
                      <CollectionKey $w={327.5} />
                      <Minus />
                    </CollectionItem>
                  </Collection>
                </Row>
                <Heading>CSS Assets</Heading>
                <Row $h={159} />
                <ToggleRow label="CSS minify" on />
                <ToggleRow label="CSS minify Windows override" on={false} />
                <ToggleRow label="CSS rewrite" on />
                <Heading>JavaScript Assets</Heading>
                <ToggleRow label="JavaScript pipeline" on={false} />
                <ToggleRow label="Include externals in JS pipeline" on />
                <ToggleRow label="JS pipeline render first" on />
                <ToggleRow label="JavaScript minify" on />
                <Heading>JavaScript Module Assets</Heading>
                <ToggleRow label="JavaScript Module pipeline" on={false} />
                <ToggleRow label="Include externals in JS Module pipeline" on />
              </Fields>
            </Panel>
          </Main>
        </Body>
        <AppSwitcher />
        <Cursor width="28" height="34" viewBox="0 0 28 34">
          <circle cx="13.5" cy="13.300" r="9.800" fill="none" stroke="#fff" strokeWidth="2.600" />
          <circle cx="13.5" cy="13.300" r="9.800" fill="none" stroke="#111" strokeWidth="1.200" />
          <path
            d="M10.500 17.200C10.300 15.500 12.600 15.200 13 16.800L14 20.200C14.400 19.300 16 19.300 16.300 20.300C17 19.600 18.400 19.900 18.600 20.900C19.600 20.500 20.800 21 20.900 22.200L21.300 26.500L20.300 29V31.500H12.800L12.500 29.800L8 25.300C7.200 24 8.800 22.800 10 23.700L11.700 25Z"
            fill="#fff"
            stroke="#111"
            strokeWidth="1.100"
            strokeLinejoin="round"
          />
          <path d="M14 24V28.500M16.200 24V28.500M18.400 24V28.500" stroke="#111" strokeWidth=".9" />
        </Cursor>
      </Screen>
    </>
  );
}
